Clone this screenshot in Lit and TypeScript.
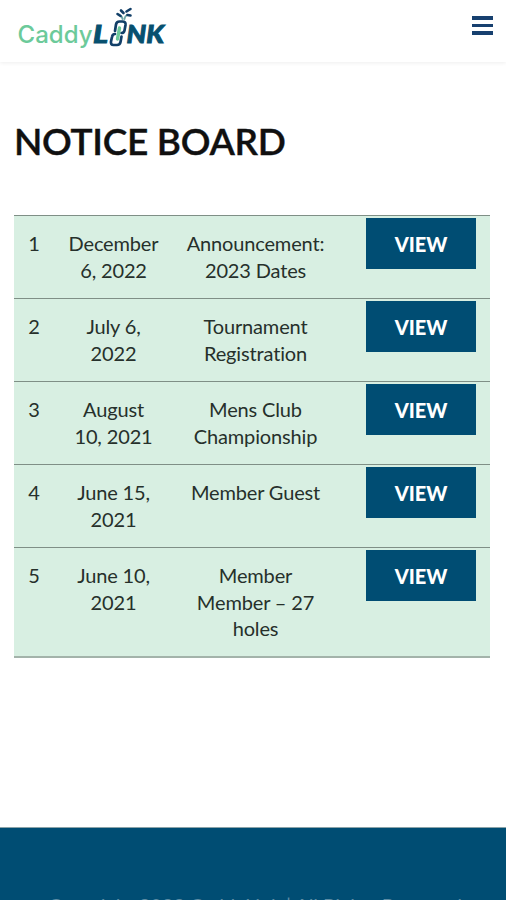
import { LitElement, html, css, svg } from "lit";
import { customElement, property } from "lit/decorators.js";

interface Notice {
  date: string[];
  title: string[];
}

const notices: Notice[] = [
  { date: ["December", "6, 2022"], title: ["Announcement:", "2023 Dates"] },
  { date: ["July 6,", "2022"], title: ["Tournament", "Registration"] },
  { date: ["August", "10, 2021"], title: ["Mens Club", "Championship"] },
  { date: ["June 15,", "2021"], title: ["Member Guest"] },
  { date: ["June 10,", "2021"], title: ["Member", "Member – 27", "holes"] },
];

const lines = (parts: string[]) => parts.map((p) => html`<div>${p}</div>`);

@customElement("site-header")
class SiteHeader extends LitElement {
  static styles = css`
    :host { display: block; }
    .bar {
      display: flex;
      justify-content: space-between;
      align-items: flex-start;
      box-sizing: border-box;
      height: 62px;
      padding-right: 13px;
      background: #fff;
      box-shadow: 0 1px 4px rgba(0, 0, 0, 0.07);
    }
    .logo { display: block; }
    .caddy { font: 500 24px "Inter", sans-serif; fill: #6cca9a; }
    .link { font: italic 900 25px "Lato", sans-serif; fill: #07506f; stroke: #07506f; stroke-width: 0.9; }
    .menu {
      display: flex;
      flex-direction: column;
      gap: 4px;
      margin-top: 16px;
      padding: 0;
      border: 0;
      background: none;
    }
    .line { width: 21px; height: 3.5px; background: #17406f; }
  `;
  render() {
    return html`<header class="bar">
      <svg class="logo" width="180" height="56" viewBox="0 0 180 56" role="img" aria-label="CaddyLINK">
        ${svg`
        <text class="caddy" x="17.500" y="43" textLength="75" lengthAdjust="spacingAndGlyphs">Caddy</text>
        <text class="link" x="93" y="42.500" textLength="15" lengthAdjust="spacingAndGlyphs">L</text>
        <text class="link" x="126.500" y="42.500" textLength="37.500" lengthAdjust="spacingAndGlyphs">NK</text>
        <g fill="none" stroke-linecap="round" stroke-linejoin="round">
          <path d="M115 31 L116 24.500 Q116.500 21.500 119.500 21.500 L122.500 21.500 Q126 21.500 125.500 25 L124.500 30.500 Q124 33 121.500 33" stroke="#123f68" stroke-width="2.700"/>
          <path d="M115 34 Q112.500 34 112 37 L111 41.500 Q110.500 45 113.500 45 L117 45 Q120 45 120.500 42 L121.500 36.500" stroke="#123f68" stroke-width="2.700"/>
          <path d="M119.500 28 L117.500 39" stroke="#6cca9a" stroke-width="3.400"/>
          <path d="M122.500 19 Q122.500 16.500 119 14.500 M124.500 19 Q124.500 16.500 127 15" stroke="#6fa8a8" stroke-width="1.900"/>
          <path d="M117.500 14 L120.500 16 M121 10.500 L123.500 13 M126.500 11.500 L130.500 9 M127.500 15 L130.500 15.500" stroke="#123f68" stroke-width="2.600"/>
        </g>`}
      </svg>
      <button class="menu" aria-label="Menu">
        <span class="line"></span><span class="line"></span><span class="line"></span>
      </button>
    </header>`;
  }
}

@customElement("notice-row")
class NoticeRow extends LitElement {
  @property({ type: Number }) number = 1;
  @property({ attribute: false }) notice!: Notice;
  static styles = css`
    :host { display: block; }
    .row {
      display: grid;
      grid-template-columns: 40px 119px 165px 109px;
      align-items: start;
      box-sizing: border-box;
      min-height: 83px;
      border-top: 1px solid #7f8f86;
      background: #d8efe2;
      color: #26302b;
      text-align: center;
      font: 400 20px/26.6px "Lato", sans-serif;
      letter-spacing: -0.15px;
      font-variant-ligatures: none;
    }
    .cell { padding: 14px 0 14.2px; }
    .view {
      margin: 2px 0 0 28px;
      width: 110px;
      height: 51px;
      border: 0;
      padding: 1px 0 0;
      background: #004d73;
      color: #fff;
      font: 900 20px/50px "Lato", sans-serif;
    }
  `;
  render() {
    return html`<div class="row">
      <div class="cell">${this.number}</div>
      <div class="cell">${lines(this.notice.date)}</div>
      <div class="cell">${lines(this.notice.title)}</div>
      <button class="view">VIEW</button>
    </div>`;
  }
}

@customElement("app-root")
class AppRoot extends LitElement {
  static styles = css`
    :host { display: block; background: #fff; font-family: "Lato", sans-serif; }
    .page { display: flex; flex-direction: column; height: 900px; overflow: hidden; }
    .content { flex: 1; padding: 0 16px 0 14px; }
    .title {
      margin: 55px 0 0;
      font-size: 37px;
      line-height: 48px;
      font-weight: 600;
      letter-spacing: -0.3px;
      color: #101010;
      -webkit-text-stroke: 0.4px #101010;
      white-space: nowrap;
    }
    .list { margin-top: 50px; border-bottom: 2px solid #a3b3aa; }
    .footer {
      box-sizing: border-box;
      height: 73px;
      padding: 64px 0 0 4px;
      border-top: 1px solid #8ba3a8;
      background: #004d73;
      color: #5d8ca4;
      text-align: center;
      font-size: 20px;
      line-height: 27px;
      letter-spacing: -0.1px;
      white-space: nowrap;
      overflow: hidden;
    }
  `;
  render() {
    return html`<div class="page">
      <site-header></site-header>
      <main class="content">
        <h1 class="title">NOTICE BOARD</h1>
        <div class="list">
          ${notices.map((n, i) => html`<notice-row .number=${i + 1} .notice=${n}></notice-row>`)}
        </div>
      </main>
      <footer class="footer">Copyright 2022 CaddyLink | All Rights Reserved</footer>
    </div>`;
  }
}
